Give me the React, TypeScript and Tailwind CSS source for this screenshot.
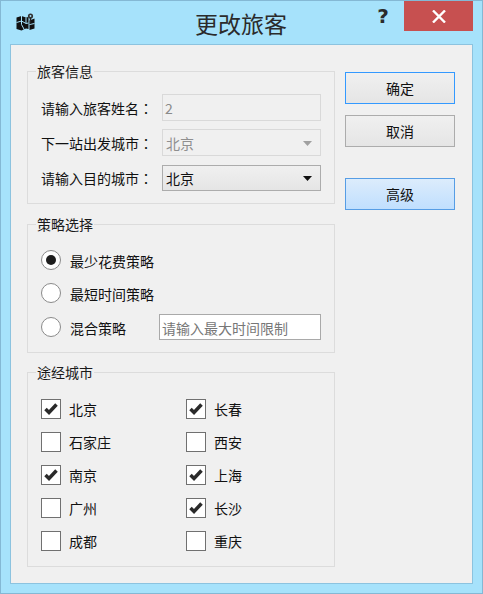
const cjk = "font-['Noto_Sans_CJK_SC','Liberation_Sans',sans-serif]"

function MapIcon() {
  return (
    <svg width="19" height="18" viewBox="0 0 19 18" className="shrink-0">
      <path d="M0.5 4.5 5.5 3 10 4.5 12.5 4V16L10 15.5 5.5 17.5 0.5 16Z" fill="#111" />
      <path d="M13.5 7.5 18.5 5.5V15.5L13.5 17Z" fill="#111" />
      <path d="M0.5 9.5 5.5 8 10 10.5 12.5 10M5.5 3V11.5M5.5 11.5 8.5 17M10 4.5V10M13.5 11.5 18.5 10.5" fill="none" stroke="#a6e2fb" strokeWidth="1" />
      <circle cx="14.5" cy="3" r="2.6" fill="#333" />
      <circle cx="14.5" cy="3" r="0.9" fill="#a6e2fb" />
      <path d="M14.5 5V11" stroke="#222" strokeWidth="1.4" />
    </svg>
  )
}

function Group({ title, className, children }: { title: string; className: string; children: React.ReactNode }) {
  return (
    <fieldset className={`border border-[#dcdcdc] pl-[13px] pr-[13px] ${className}`}>
      <legend className="ml-[-5px] px-[1px] text-[14px] leading-[18px] text-[#1a1a1a]">{title}</legend>
      {children}
    </fieldset>
  )
}

function Arrow({ color }: { color: string }) {
  return (
    <svg width="9" height="5" viewBox="0 0 9 5" className="shrink-0">
      <path d="M0 0H9L4.5 5Z" fill={color} />
    </svg>
  )
}

function FormRow({ label, children }: { label: string; children: React.ReactNode }) {
  return (
    <div className="flex h-[27px] items-center">
      <span className="w-[121px] shrink-0 pt-[2px] text-[14px] text-[#111]">
        {label}
        {/* the TC face centres the full-width colon */}
        <span className="font-['Noto_Sans_CJK_TC',sans-serif]">：</span>
      </span>
      {children}
    </div>
  )
}

function Radio({ label, checked, children }: { label: string; checked?: boolean; children?: React.ReactNode }) {
  return (
    <div className="flex h-[26px] items-center">
      <span className="flex h-[20px] w-[20px] shrink-0 items-center justify-center rounded-full border border-[#8a8a8a] bg-white">
        {checked && <span className="h-[10px] w-[10px] rounded-full bg-[#1e1e1e]" />}
      </span>
      <span className="ml-[9px] pt-[2px] text-[14px] text-[#111]">{label}</span>
      {children}
    </div>
  )
}

function Check({ label, checked }: { label: string; checked?: boolean }) {
  return (
    <div className="flex h-[20px] items-center">
      <span className="flex h-[20px] w-[20px] shrink-0 items-center justify-center border border-[#707070] bg-white">
        {checked && (
          <svg width="14" height="12" viewBox="0 0 14 12">
            <path d="M1.5 6 5 9.5 12.5 1.5" fill="none" stroke="#2a2a2a" strokeWidth="3.5" />
          </svg>
        )}
      </span>
      <span className="ml-[8px] text-[14px] text-[#111]">{label}</span>
    </div>
  )
}

const cities: [string, boolean][] = [
  ['北京', true],
  ['长春', true],
  ['石家庄', false],
  ['西安', false],
  ['南京', true],
  ['上海', true],
  ['广州', false],
  ['长沙', true],
  ['成都', false],
  ['重庆', false],
]

export default function App() {
  return (
    <div className={`flex h-[594px] w-[483px] flex-col border border-[#84b8d4] bg-[#a6e2fb] ${cjk}`}>
      {/* Title bar */}
      <div className="flex h-[43px] shrink-0 items-start">
        <div className="mt-[12px] ml-[15px]">
          <MapIcon />
        </div>
        <div className="mt-[3px] w-[333px] pl-[160px] text-[23px] leading-[38px] text-[#2b2b2b]">更改旅客</div>
        <div className="mt-[3px] w-[30px] text-center font-['DejaVu_Sans',sans-serif] text-[20px] leading-[24px] font-bold text-[#2b2b2b]">?</div>
        <div className="ml-[6px] flex h-[30px] w-[69px] items-center justify-center bg-[#c75050]">
          <svg width="14" height="13" viewBox="0 0 14 13">
            <path d="M1 0.5 13 12.5M13 0.5 1 12.5" stroke="#fff" strokeWidth="2.4" />
          </svg>
        </div>
      </div>

      {/* Dialog body */}
      <div className="mx-[9px] flex h-[540px] border border-[#8cc3df] bg-[#f0f0f0] pt-[17px] pl-[16px]">
        <div className="flex w-[308px] shrink-0 flex-col">
          <Group title="旅客信息" className="h-[142px] pt-[14px]">
            <div className="flex flex-col gap-[8px]">
              <FormRow label="请输入旅客姓名">
                <div className="flex h-[27px] flex-1 items-center border border-[#d9d9d9] pt-[1px] pl-[2px] text-[14px] text-[#8a8a8a]">2</div>
              </FormRow>
              <FormRow label="下一站出发城市">
                <div className="flex h-[27px] flex-1 items-center justify-between border border-[#d9d9d9] pt-[1px] pr-[8px] pl-[3px] text-[14px] text-[#8f8f8f]">
                  北京
                  <Arrow color="#a0a0a0" />
                </div>
              </FormRow>
              <FormRow label="请输入目的城市">
                <div className="flex h-[26px] flex-1 items-center justify-between border border-[#acacac] bg-gradient-to-b from-[#f0f0f0] to-[#e5e5e5] pt-[1px] pr-[8px] pl-[3px] text-[14px] text-[#111]">
                  北京
                  <Arrow color="#111" />
                </div>
              </FormRow>
            </div>
          </Group>
          <Group title="策略选择" className="mt-[11px] h-[138px] pt-[14px]">
            <div className="flex flex-col gap-[7px]">
              <Radio label="最少花费策略" checked />
              <Radio label="最短时间策略" />
              <div className="mt-[1px]">
                <Radio label="混合策略">
                  <div className="ml-[33px] flex h-[26px] w-[162px] items-center border border-[#a9a9a9] bg-white pt-[2px] pl-[2px] text-[14px] text-[#777]">请输入最大时间限制</div>
                </Radio>
              </div>
            </div>
          </Group>
          <Group title="途经城市" className="mt-[10px] h-[204px] pt-[18px]">
            <div className="grid grid-cols-[145px_1fr] gap-y-[13px]">
              {cities.map(([name, on]) => (
                <Check key={name} label={name} checked={on} />
              ))}
            </div>
          </Group>
        </div>

        <div className="mt-[10px] ml-[10px] flex w-[110px] shrink-0 flex-col">
          <button className="h-[32px] border border-[#3399ff] bg-gradient-to-b from-[#f0f0f0] to-[#e5e5e5] pt-[1px] text-[14px] text-[#111]">确定</button>
          <button className="mt-[11px] h-[32px] border border-[#acacac] bg-gradient-to-b from-[#f0f0f0] to-[#e5e5e5] pt-[1px] text-[14px] text-[#111]">取消</button>
          <button className="mt-[31px] h-[32px] border border-[#569de5] bg-gradient-to-b from-[#dcecfc] to-[#c0dffe] pt-[1px] text-[14px] text-[#111]">高级</button>
        </div>
      </div>
    </div>
  )
}
